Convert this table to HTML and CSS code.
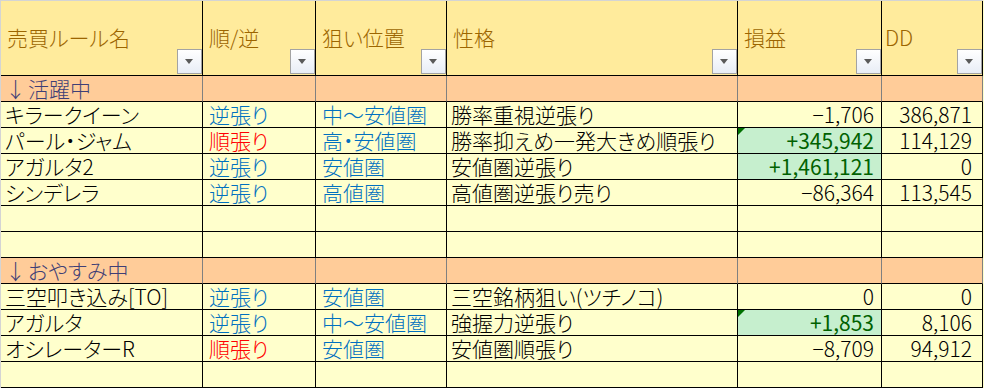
FILE: index.html
```html
<!DOCTYPE html>
<html lang="ja">
<head>
<meta charset="utf-8">
<title>売買ルール</title>
<link rel="stylesheet" href="styles.css">
</head>
<body>
<div class="sheet">
  <div class="cell head">売買ルール名<span class="filter"></span></div>
  <div class="cell head">順/逆<span class="filter"></span></div>
  <div class="cell head">狙い位置<span class="filter"></span></div>
  <div class="cell head">性格<span class="filter"></span></div>
  <div class="cell head">損益<span class="filter"></span></div>
  <div class="cell head dd">DD<span class="filter"></span></div>

  <div class="cell sec"><span class="arrow">↓</span>活躍中</div><div class="cell sec"></div><div class="cell sec"></div><div class="cell sec"></div><div class="cell sec"></div><div class="cell sec"></div>

  <div class="cell">キラークイーン</div><div class="cell blue">逆張り</div><div class="cell blue">中～安値圏</div><div class="cell">勝率重視逆張り</div><div class="cell num">−1,706</div><div class="cell num last">386,871</div>

  <div class="cell">パール・ジャム</div><div class="cell red">順張り</div><div class="cell blue">高・安値圏</div><div class="cell">勝率抑えめ一発大きめ順張り</div><div class="cell num good"><span class="note"></span>+345,942</div><div class="cell num last">114,129</div>

  <div class="cell">アガルタ2</div><div class="cell blue">逆張り</div><div class="cell blue">安値圏</div><div class="cell">安値圏逆張り</div><div class="cell num good">+1,461,121</div><div class="cell num last">0</div>

  <div class="cell">シンデレラ</div><div class="cell blue">逆張り</div><div class="cell blue">高値圏</div><div class="cell">高値圏逆張り売り</div><div class="cell num">−86,364</div><div class="cell num last">113,545</div>

  <div class="cell"></div><div class="cell"></div><div class="cell"></div><div class="cell"></div><div class="cell"></div><div class="cell"></div>
  <div class="cell"></div><div class="cell"></div><div class="cell"></div><div class="cell"></div><div class="cell"></div><div class="cell"></div>

  <div class="cell sec"><span class="arrow">↓</span>おやすみ中</div><div class="cell sec"></div><div class="cell sec"></div><div class="cell sec"></div><div class="cell sec"></div><div class="cell sec"></div>

  <div class="cell">三空叩き込み[TO]</div><div class="cell blue">逆張り</div><div class="cell blue">安値圏</div><div class="cell">三空銘柄狙い(ツチノコ)</div><div class="cell num">0</div><div class="cell num last">0</div>

  <div class="cell">アガルタ</div><div class="cell blue">逆張り</div><div class="cell blue">中～安値圏</div><div class="cell">強握力逆張り</div><div class="cell num good"><span class="note"></span>+1,853</div><div class="cell num last">8,106</div>

  <div class="cell">オシレーターR</div><div class="cell red">順張り</div><div class="cell blue">安値圏</div><div class="cell">安値圏順張り</div><div class="cell num">−8,709</div><div class="cell num last">94,912</div>

  <div class="cell"></div><div class="cell"></div><div class="cell"></div><div class="cell"></div><div class="cell"></div><div class="cell"></div>
</div>
</body>
</html>
```

FILE: styles.css
```css
html, body {
  margin: 0;
  padding: 0;
  background: #ffffcc;
}

body {
  font-family: "Noto Sans CJK JP", "Noto Sans", sans-serif;
  font-size: 21px;
  font-weight: 300;
  font-feature-settings: "palt";
  color: #000;
}

.sheet {
  display: grid;
  grid-template-columns: 202px 113px 131px 291px 144px 101px;
  grid-template-rows: 75px;
  grid-auto-rows: 26px;
  border-top: 1px solid #d4d4d4;
  border-left: 1px solid #d4d4d4;
  width: max-content;
}

.cell {
  position: relative;
  box-sizing: border-box;
  border-right: 1px solid #000;
  border-bottom: 1px solid #000;
  background: #ffffcc;
  padding: 0 3px 0 4px;
  line-height: 25px;
  white-space: nowrap;
}

.head {
  background: #ffeb9c;
  color: #9c6500;
  line-height: 72px;
  padding-left: 6px;
}

.head.dd {
  padding-left: 3px;
}

.filter {
  position: absolute;
  right: 0;
  bottom: 1px;
  width: 25px;
  height: 25px;
  box-sizing: border-box;
  border: 1px solid #a3a3a3;
  background: linear-gradient(#ffffff, #e8edf6);
}

.filter::after {
  content: "";
  position: absolute;
  left: 7px;
  top: 9px;
  border-left: 4.5px solid transparent;
  border-right: 4.5px solid transparent;
  border-top: 5px solid #5a5a5a;
}

.sec {
  background: #ffcc99;
  color: #3f3f76;
  border-right-color: #808080;
}

.arrow {
  font-feature-settings: normal;
  margin-right: 2px;
}

.blue {
  color: #0070c0;
  padding-left: 6px;
}

.red {
  color: #ff0000;
  padding-left: 6px;
}

.num {
  text-align: right;
  padding-right: 7px;
}

.num.last {
  padding-right: 10px;
}

.good {
  background: #c6efce;
  color: #006100;
  font-weight: 400;
}

.note {
  position: absolute;
  left: 0;
  top: 0;
  width: 0;
  height: 0;
  border-top: 7px solid #007000;
  border-right: 7px solid transparent;
}
```
